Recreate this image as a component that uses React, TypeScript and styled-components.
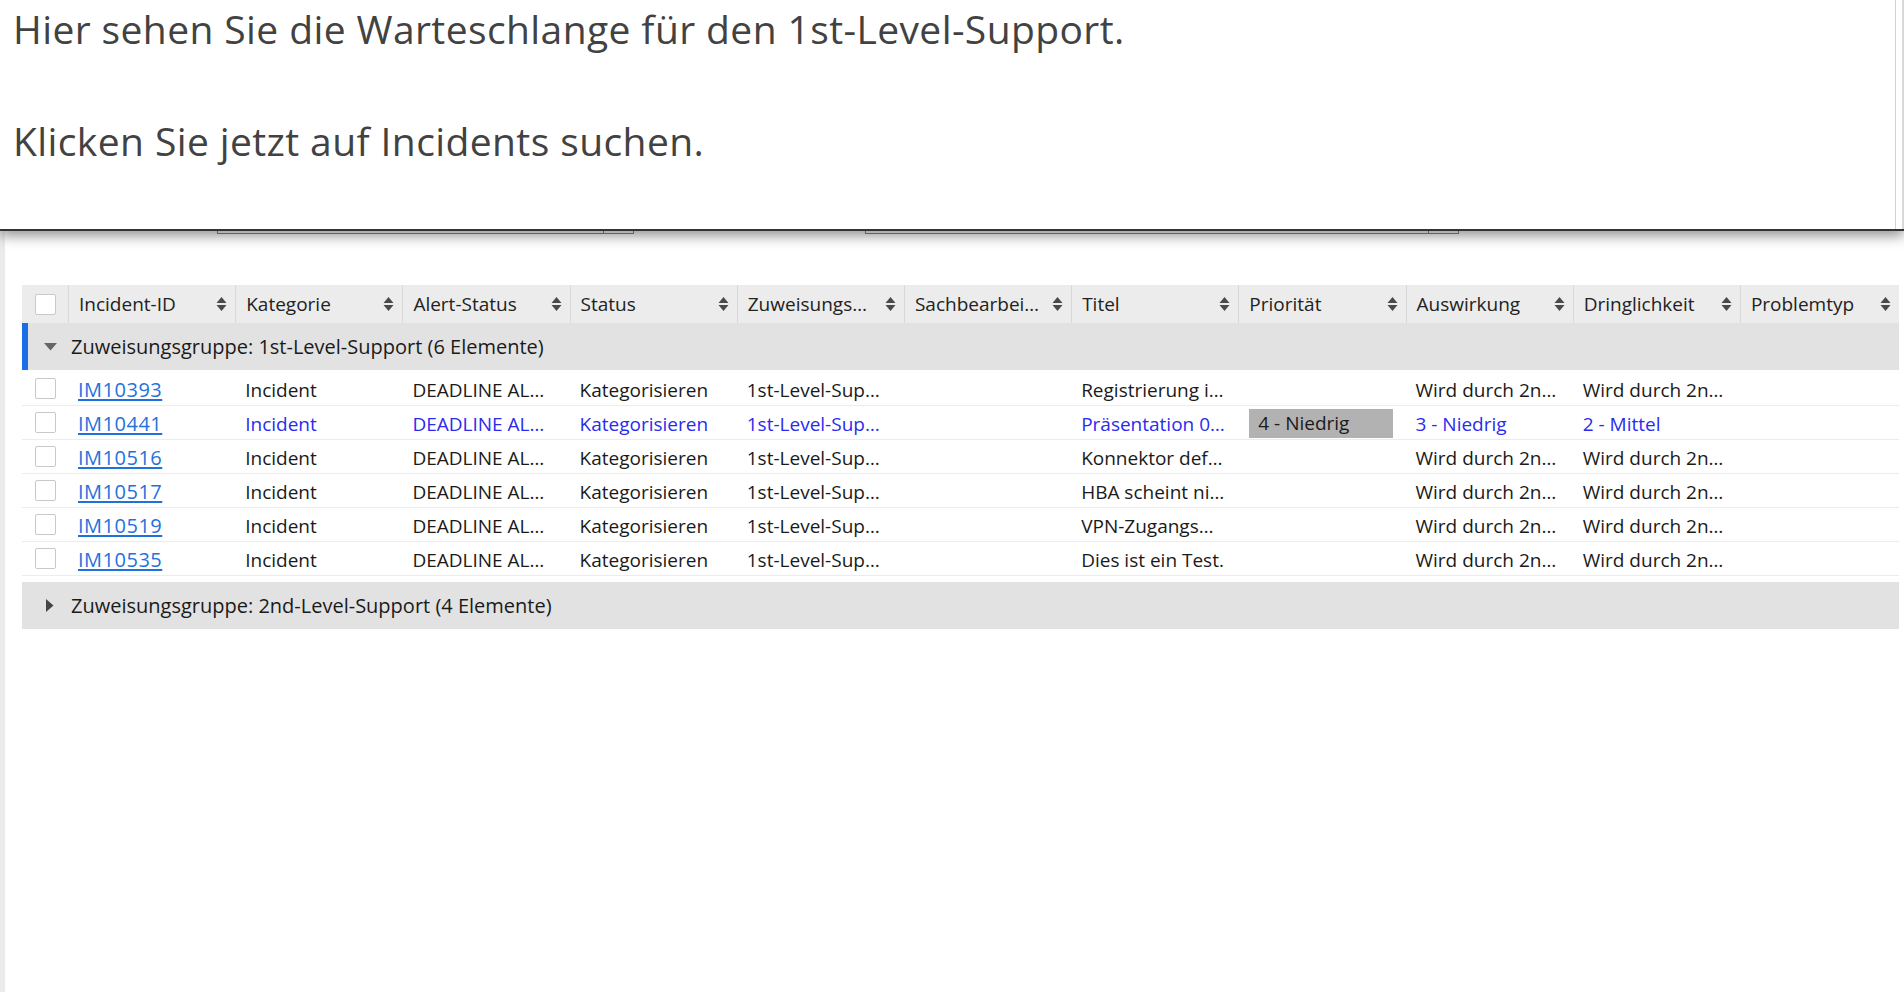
import styled, { createGlobalStyle } from 'styled-components'

const GlobalStyle = createGlobalStyle`
	body {
		margin: 0;
		background: #fff;
		font-family: 'Open Sans', 'Noto Sans', sans-serif;
		color: #1a1a1a;
	}
`

const Screen = styled.div`
	position: relative;
`

const Page = styled.div`
	min-height: 992px;
	border-left: 5px solid #ebebeb;
	box-sizing: border-box;
`

const Overlay = styled.div`
	position: absolute;
	top: 0;
	left: 0;
	right: 0;
	height: 229px;
	display: flex;
	background: #fff;
	border-bottom: 2px solid #333;
	box-shadow: 0 5px 12px rgba(0, 0, 0, 0.42);
	z-index: 2;
`

const OverlayText = styled.div`
	flex: 1;
	padding: 0 0 0 13px;
	border-right: 1px solid #d2d2d2;
`

const OverlayTrack = styled.div`
	width: 6px;
	border-right: 2px solid #d8d8d8;
`

const Hint = styled.p`
	margin: 0 0 55px;
	font-size: 39px;
	line-height: 57px;
	letter-spacing: 0.4px;
	color: #424242;
`

const SearchForm = styled.div`
	height: 234px;
	display: flex;
	align-items: flex-end;
	padding-left: 212px;
	box-sizing: border-box;
`

const Field = styled.div<{ $width: number; $gap?: number }>`
	display: flex;
	width: ${p => p.$width}px;
	height: 30px;
	margin-left: ${p => p.$gap ?? 0}px;
	border: 1px solid #888;
	box-sizing: border-box;
	background: #fff;
`

const FieldInput = styled.div`
	flex: 1;
`

const FieldButton = styled.div`
	width: 29px;
	border-left: 1px solid #888;
`

const Table = styled.div`
	margin: 51px 0 0 17px;
	width: 1877px;
	font-size: 19px;
`

const columns = '46px repeat(10, 167.2px) 1fr'

const HeaderRow = styled.div`
	display: grid;
	grid-template-columns: ${columns};
	height: 38px;
	background: #ececec;
	color: #222;
`

const HeaderCell = styled.div`
	display: flex;
	align-items: center;
	justify-content: space-between;
	padding: 0 8px 0 10px;
	border-left: 1px solid #d8d8d8;
	white-space: nowrap;
	overflow: hidden;
`

const CheckCell = styled.div`
	display: flex;
	align-items: center;
	justify-content: center;
`

const Checkbox = styled.div`
	width: 21px;
	height: 21px;
	box-sizing: border-box;
	border: 1px solid #c9c9c9;
	border-radius: 2px;
	background: #fff;
`

const GroupRow = styled.div<{ $active?: boolean }>`
	display: flex;
	align-items: center;
	gap: 11px;
	height: 47px;
	box-sizing: border-box;
	padding-left: ${p => (p.$active ? '12px' : '18px')};
	background: #e2e2e2;
	border-left: ${p => (p.$active ? '6px solid #1a6fe6' : 'none')};
	font-size: 20px;
	color: #1a1a1a;
`

const Arrow = styled.span`
	display: flex;
	width: 20px;
	justify-content: center;
`

const Body = styled.div`
	padding: 2px 0 6px;
`

const Row = styled.div<{ $highlight?: boolean }>`
	display: grid;
	grid-template-columns: ${columns};
	height: 34px;
	box-sizing: border-box;
	border-bottom: 1px solid #ececec;
	color: ${p => (p.$highlight ? '#2b2bef' : '#1a1a1a')};
`

const Cell = styled.div`
	display: flex;
	align-items: center;
	padding: 2px 0 0 10px;
	white-space: nowrap;
	overflow: hidden;
`

const IdLink = styled.a`
	font-size: 20px;
	letter-spacing: 0.5px;
	color: #1f72dc;
	text-decoration: underline;
	text-underline-offset: 2px;
`

const BadgeCell = styled.div`
	display: flex;
	align-items: center;
	padding: 1px 13px 0 11px;
`

const Badge = styled.div`
	flex: 1;
	height: 29px;
	display: flex;
	align-items: center;
	padding-left: 9px;
	background: #b2b2b2;
	color: #1a1a1a;
`

const SortIcon = () => (
	<svg width="11" height="16" viewBox="0 0 11 16">
		<path d="M5.5 1 L10.5 7 L0.5 7 Z M5.5 15 L10.5 9 L0.5 9 Z" fill="#4a4a4a" />
	</svg>
)

const DownArrow = () => (
	<svg width="13" height="8" viewBox="0 0 13 8">
		<path d="M0 0 L13 0 L6.5 7.5 Z" fill="#666" />
	</svg>
)

const RightArrow = () => (
	<svg width="8" height="13" viewBox="0 0 8 13">
		<path d="M0 0 L7.5 6.5 L0 13 Z" fill="#444" />
	</svg>
)

const headers = [
	'Incident-ID',
	'Kategorie',
	'Alert-Status',
	'Status',
	'Zuweisungs…',
	'Sachbearbei…',
	'Titel',
	'Priorität',
	'Auswirkung',
	'Dringlichkeit',
	'Problemtyp',
]

interface Incident {
	id: string
	title: string
	priority?: string
	impact: string
	urgency: string
	highlight?: boolean
}

const incidents: Incident[] = [
	{ id: 'IM10393', title: 'Registrierung i…', impact: 'Wird durch 2n…', urgency: 'Wird durch 2n…' },
	{
		id: 'IM10441',
		title: 'Präsentation 0…',
		priority: '4 - Niedrig',
		impact: '3 - Niedrig',
		urgency: '2 - Mittel',
		highlight: true,
	},
	{ id: 'IM10516', title: 'Konnektor def…', impact: 'Wird durch 2n…', urgency: 'Wird durch 2n…' },
	{ id: 'IM10517', title: 'HBA scheint ni…', impact: 'Wird durch 2n…', urgency: 'Wird durch 2n…' },
	{ id: 'IM10519', title: 'VPN-Zugangs…', impact: 'Wird durch 2n…', urgency: 'Wird durch 2n…' },
	{ id: 'IM10535', title: 'Dies ist ein Test.', impact: 'Wird durch 2n…', urgency: 'Wird durch 2n…' },
]

export default function App() {
	return (
		<>
			<GlobalStyle />
			<Screen>
				<Overlay>
					<OverlayText>
						<Hint>Hier sehen Sie die Warteschlange für den 1st-Level-Support.</Hint>
						<Hint>Klicken Sie jetzt auf Incidents suchen.</Hint>
					</OverlayText>
					<OverlayTrack />
				</Overlay>

				<Page>
					<SearchForm>
						<Field $width={417}>
							<FieldInput />
							<FieldButton />
						</Field>
						<Field $width={594} $gap={231}>
							<FieldInput />
							<FieldButton />
						</Field>
					</SearchForm>

					<Table>
						<HeaderRow>
							<CheckCell>
								<Checkbox />
							</CheckCell>
							{headers.map(h => (
								<HeaderCell key={h}>
									<span>{h}</span>
									<SortIcon />
								</HeaderCell>
							))}
						</HeaderRow>

						<GroupRow $active>
							<Arrow>
								<DownArrow />
							</Arrow>
							<span>Zuweisungsgruppe: 1st-Level-Support (6 Elemente)</span>
						</GroupRow>

						<Body>
							{incidents.map(inc => (
								<Row key={inc.id} $highlight={inc.highlight}>
									<CheckCell>
										<Checkbox />
									</CheckCell>
									<Cell>
										<IdLink>{inc.id}</IdLink>
									</Cell>
									<Cell>Incident</Cell>
									<Cell>DEADLINE AL…</Cell>
									<Cell>Kategorisieren</Cell>
									<Cell>1st-Level-Sup…</Cell>
									<Cell />
									<Cell>{inc.title}</Cell>
									{inc.priority ? (
										<BadgeCell>
											<Badge>{inc.priority}</Badge>
										</BadgeCell>
									) : (
										<Cell />
									)}
									<Cell>{inc.impact}</Cell>
									<Cell>{inc.urgency}</Cell>
									<Cell />
								</Row>
							))}
						</Body>

						<GroupRow>
							<Arrow>
								<RightArrow />
							</Arrow>
							<span>Zuweisungsgruppe: 2nd-Level-Support (4 Elemente)</span>
						</GroupRow>
					</Table>
				</Page>
			</Screen>
		</>
	)
}
